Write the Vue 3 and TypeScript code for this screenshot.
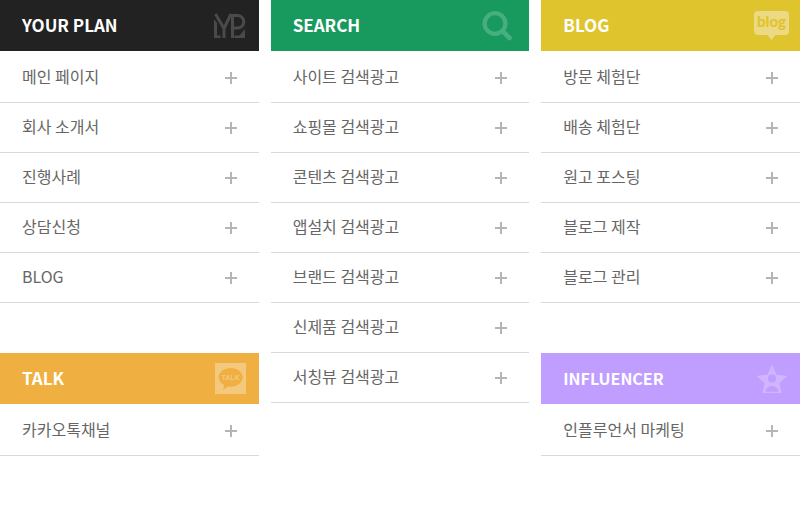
<script setup lang="ts">
type IconName = 'plan' | 'search' | 'blog' | 'talk' | 'star'

interface MenuGroup {
  id: string
  title: string
  icon: IconName
  items: string[]
}

const columns: MenuGroup[][] = [
  [
    {
      id: 'plan',
      title: 'YOUR PLAN',
      icon: 'plan',
      items: ['메인 페이지', '회사 소개서', '진행사례', '상담신청', 'BLOG'],
    },
    { id: 'talk', title: 'TALK', icon: 'talk', items: ['카카오톡채널'] },
  ],
  [
    {
      id: 'search',
      title: 'SEARCH',
      icon: 'search',
      items: [
        '사이트 검색광고',
        '쇼핑몰 검색광고',
        '콘텐츠 검색광고',
        '앱설치 검색광고',
        '브랜드 검색광고',
        '신제품 검색광고',
        '서칭뷰 검색광고',
      ],
    },
  ],
  [
    {
      id: 'blog',
      title: 'BLOG',
      icon: 'blog',
      items: ['방문 체험단', '배송 체험단', '원고 포스팅', '블로그 제작', '블로그 관리'],
    },
    { id: 'influencer', title: 'INFLUENCER', icon: 'star', items: ['인플루언서 마케팅'] },
  ],
]
</script>

<template>
  <nav class="sitemap">
    <div v-for="(groups, index) in columns" :key="index" class="column">
      <section v-for="group in groups" :key="group.id" class="group" :class="group.id">
        <header class="head">
          <h2 class="title">{{ group.title }}</h2>
          <svg class="icon" viewBox="0 0 40 41" aria-hidden="true">
            <g v-if="group.icon === 'plan'" fill="none" stroke="#4a4a4a" stroke-width="3">
              <path d="M3 14l3 4v12.500h3.500V33H3z" fill="#4a4a4a" stroke="none" />
              <path d="M4.500 9l8.500 14.500L20 9M13 22v11" />
              <path d="M18.500 10.500h8a6.300 6.300 0 0 1 0 12.600H22M21.500 10v23" />
              <path d="M34 24v9H23.500v-2.500h5z" fill="#4a4a4a" stroke="none" />
            </g>
            <g v-else-if="group.icon === 'search'" fill="none" stroke="#46ae7f">
              <circle cx="14" cy="18.500" r="10.400" stroke-width="4.200" />
              <path d="M22 26.500l6.500 6.500" stroke-width="4.600" stroke-linecap="round" />
            </g>
            <g v-else-if="group.icon === 'blog'">
              <path
                d="M6 6h27a4 4 0 0 1 4 4v16a4 4 0 0 1-4 4h-9.500l-4 5-4-5H6a4 4 0 0 1-4-4V10a4 4 0 0 1 4-4z"
                fill="#ecd983"
              />
              <text x="19.500" y="22" text-anchor="middle" class="blog-mark">blog</text>
            </g>
            <g v-else-if="group.icon === 'talk'">
              <rect x="4" y="5" width="31" height="31" fill="#f5c97d" />
              <path
                d="M19.700 10c6.700 0 12 4.100 12 9.300s-5.300 9.400-12 9.400c-1 0-1.900-.1-2.800-.2l-4.800 3.300 1-4.700c-3.300-1.700-5.400-4.500-5.400-7.800 0-5.200 5.300-9.300 12-9.300z"
                fill="#efaf41"
              />
              <text x="19.700" y="22" text-anchor="middle" class="talk-mark">TALK</text>
            </g>
            <g v-else>
              <path
                d="M20 6.500l4.700 10.200 10.600 1.200-7.900 7.300L29.700 35H10.300l2.300-9.800-7.900-7.300 10.600-1.200z"
                fill="#cfb5ff"
              />
              <circle cx="20" cy="20.500" r="4" fill="#c09eff" />
              <path d="M13.500 33.700c.6-3.500 3.200-5.700 6.500-5.700s5.900 2.200 6.500 5.700z" fill="#c09eff" />
            </g>
          </svg>
        </header>
        <ul class="list">
          <li v-for="item in group.items" :key="item" class="item">
            <a class="link" href="#">
              <span class="label">{{ item }}</span>
              <svg class="plus" viewBox="0 0 12 12" aria-hidden="true">
                <path d="M5 0h2v5h5v2H7v5H5V7H0V5h5z" fill="#b5b5b5" />
              </svg>
            </a>
          </li>
        </ul>
      </section>
    </div>
  </nav>
</template>

<style>
body {
  margin: 0;
  background: #fff;
}
</style>

<style scoped>
.sitemap {
  display: grid;
  grid-template-columns: repeat(3, minmax(0, 1fr));
  gap: 12px;
  align-items: start;
  font-family: "Noto Sans CJK KR", "Noto Sans", sans-serif;
}

.column {
  display: flex;
  flex-direction: column;
  gap: 50px;
}

.head {
  display: flex;
  align-items: center;
  justify-content: space-between;
  height: 51px;
  padding: 0 8px 0 22px;
  color: #fff;
}

.plan .head {
  background: #222;
}

.search .head {
  background: #189a5f;
}

.blog .head {
  background: #e0c42e;
}

.talk .head {
  background: #efaf41;
}

.influencer .head {
  background: #c09eff;
}

.title {
  margin: 0;
  padding-bottom: 2px;
  font-size: 17px;
  line-height: 24px;
  font-weight: 700;
}

.influencer .title {
  font-size: 16px;
}

.icon {
  flex: none;
  width: 40px;
  height: 41px;
}

.blog-mark {
  fill: #e0c42e;
  font-family: Lato, sans-serif;
  font-size: 15px;
  font-weight: 900;
}

.talk-mark {
  fill: #f5c97d;
  font-family: "Liberation Sans", sans-serif;
  font-size: 7px;
  font-weight: 700;
}

.list {
  margin: 0;
  padding: 2px 0 0;
  list-style: none;
}

.link {
  display: flex;
  align-items: center;
  justify-content: space-between;
  height: 49px;
  padding: 0 22px;
  border-bottom: 1px solid #d9d9d9;
  color: #666;
  font-size: 16px;
  line-height: 24px;
  text-decoration: none;
}

.label {
  padding-bottom: 4px;
}

.plus {
  flex: none;
  width: 12px;
  height: 12px;
}
</style>
